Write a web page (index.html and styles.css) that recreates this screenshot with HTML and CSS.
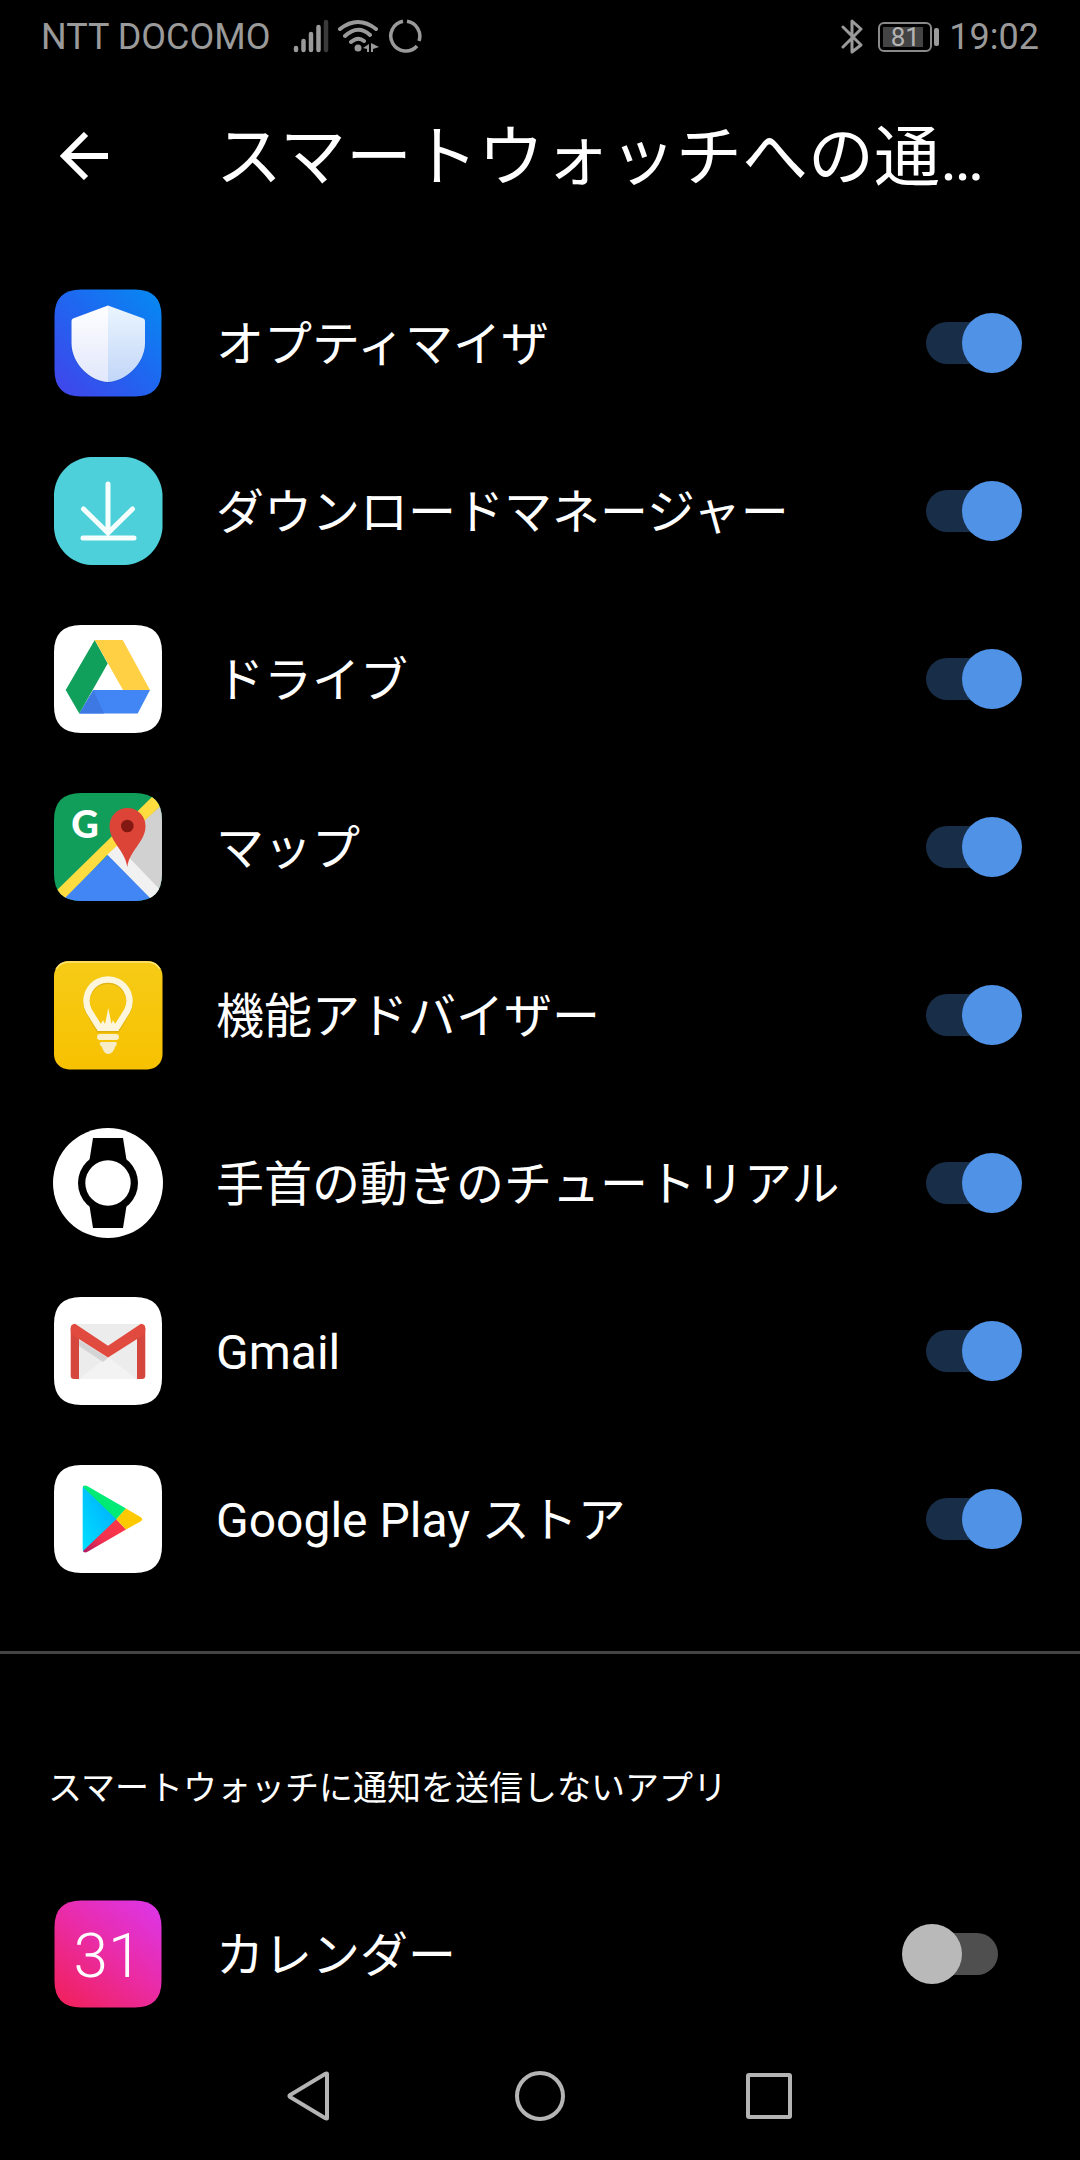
FILE: index.html
```html
<!DOCTYPE html>
<html lang="ja">
<head>
    <meta charset="utf-8">
    <meta name="viewport" content="width=device-width, initial-scale=1">
    <title>スマートウォッチへの通知</title>
    <link rel="stylesheet" href="styles.css">
</head>
<body>
    <div class="status-bar">
        <span class="carrier">NTT DOCOMO</span>
        <div class="status-icons">
            <!-- signal -->
            <svg width="36" height="36" viewBox="0 0 36 36" fill="none" stroke="#9a9a9a" stroke-width="4.500" stroke-linecap="round">
                <path d="M3 29v2M10.500 22v9M18 15v16M25.500 8v23"/>
                <path d="M33 3v28" stroke="#3a3a3a"/>
            </svg>
            <!-- wifi -->
            <svg width="42" height="36" viewBox="0 0 42 36" fill="none" stroke="#9a9a9a" stroke-width="4" stroke-linecap="round">
                <path d="M3 10Q21-4 39 10M8 17Q21 5 33 16M14 23Q21 17 27 22"/>
                <circle cx="21" cy="29" r="3.500" fill="#9a9a9a" stroke="none"/>
                <path d="M32 25v8h-2v-3l-4-1zM34 24v9h2v-3l6-2z" fill="#9a9a9a" stroke="none"/>
            </svg>
            <!-- data saver ring -->
            <svg width="36" height="36" viewBox="0 0 36 36" fill="none" stroke="#9a9a9a" stroke-width="3.500">
                <path d="M20 2.300A15 15 0 0 1 32 22M30 27A15 15 0 1 1 16 2.300"/>
            </svg>
        </div>
        <div class="status-right">
            <svg width="22" height="36" viewBox="0 0 22 36" fill="none" stroke="#9a9a9a" stroke-width="3" stroke-linejoin="round" stroke-linecap="round">
                <path d="M2 8L20 26L11 33V2L20 10L2 28"/>
            </svg>
            <div class="battery"><span class="battery-level">81</span></div>
            <span class="clock">19:02</span>
        </div>
    </div>

    <header class="header">
        <button class="back" type="button" aria-label="戻る">
            <svg width="48" height="48" viewBox="0 0 48 48" fill="none" stroke="#fff" stroke-width="6">
                <path d="M26 2L4 24L26 46M4 24H48"/>
            </svg>
        </button>
        <h1 class="title">スマートウォッチへの通…</h1>
    </header>

    <main>
        <div class="app-list">
            <label class="app">
                <svg class="icon" viewBox="0 0 110 110">
                    <defs>
                        <linearGradient id="optBg" x1="0" y1="1" x2="1" y2="0">
                            <stop offset="0" stop-color="#4343ea"/>
                            <stop offset="0.5" stop-color="#2065f0"/>
                            <stop offset="1" stop-color="#048bf2"/>
                        </linearGradient>
                        <linearGradient id="optL" x1="0" y1="0" x2="0" y2="1">
                            <stop offset="0" stop-color="#fff"/>
                            <stop offset="1" stop-color="#e1e7fb"/>
                        </linearGradient>
                        <linearGradient id="optR" x1="0" y1="0" x2="0" y2="1">
                            <stop offset="0" stop-color="#eaf5fe"/>
                            <stop offset="1" stop-color="#c2d6f8"/>
                        </linearGradient>
                    </defs>
                    <path d="M28 1.500H82Q108.500 1.500 108.500 28V82Q108.500 108.500 82 108.500H28Q1.500 108.500 1.500 82V28Q1.500 1.500 28 1.500Z" fill="url(#optBg)"/>
                    <path d="M55 18L92 31.500V56C92 76 74 93 55 95C36 93 18 76 18 56V31.500Z" fill="#1c49c4" opacity="0.4"/>
                    <path d="M55 17.500L20 30.500Q18.500 31 18.500 33V55C18.500 76 38 93.500 55 94Z" fill="url(#optL)"/>
                    <path d="M55 17.500L90.500 30.500Q92 31 92 33V55C92 76 72 93.500 55 94Z" fill="url(#optR)"/>
                </svg>
                <span class="name">オプティマイザ</span>
                <input class="switch" type="checkbox" role="switch" checked>
            </label>
            <label class="app">
                <svg class="icon" viewBox="0 0 110 110">
                    <path d="M38 1H72C92 2 108 18 109.500 38V72C108 92 92 108 72 109H38C18 108 2 92 1 72V38C2 18 18 2 38 1Z" fill="#4dd0d9"/>
                    <path d="M55 28V76M30.500 53L55 77L79.500 53M30 82H81" fill="none" stroke="#f6fffe" stroke-width="5" stroke-linecap="round"/>
                </svg>
                <span class="name">ダウンロードマネージャー</span>
                <input class="switch" type="checkbox" role="switch" checked>
            </label>
            <label class="app">
                <svg class="icon" viewBox="0 0 110 110">
                    <path d="M28 1H82Q109 1 109 28V82Q109 109 82 109H28Q1 109 1 82V28Q1 1 28 1Z" fill="#fff"/>
                    <path d="M40.300 66H97L84.700 89.500H26.300Z" fill="#4285f4"/>
                    <path d="M40.300 66L26.300 89.500H51Z" fill="#3d78e3"/>
                    <path d="M41.700 16L54.700 39.500L26.300 89.500L12.700 66Z" fill="#11a05c"/>
                    <path d="M41.700 16H69.700L97 66H70Z" fill="#ffcf44"/>
                </svg>
                <span class="name">ドライブ</span>
                <input class="switch" type="checkbox" role="switch" checked>
            </label>
            <label class="app">
                <svg class="icon" viewBox="0 0 110 110">
                    <defs>
                        <clipPath id="mapClip">
                            <path d="M28 1H82Q109 1 109 28V82Q109 109 82 109H28Q1 109 1 82V28Q1 1 28 1Z"/>
                        </clipPath>
                    </defs>
                    <g clip-path="url(#mapClip)">
                        <rect width="110" height="110" fill="#119e5a"/>
                        <path d="M112 10V110H100L55 60Z" fill="#d1d1d1"/>
                        <path d="M63 52L115 106L102 112L53 62Z" fill="#f1f1f1"/>
                        <path d="M100 4L112 10L55 62L10 110L-2 104Z" fill="#ffdc3f"/>
                        <path d="M54.700 63L101 110H8Z" fill="#4285f4"/>
                        <path d="M74.300 75C72 58 56.500 50 56.500 34A18 18 0 0 1 92.500 34C92.500 50 76.500 58 74.300 75Z" fill="#dc4437"/>
                        <circle cx="74.300" cy="34" r="6.300" fill="#821811"/>
                    </g>
                    <text class="map-g" x="32" y="46">G</text>
                </svg>
                <span class="name">マップ</span>
                <input class="switch" type="checkbox" role="switch" checked>
            </label>
            <label class="app">
                <svg class="icon" viewBox="0 0 110 110">
                    <defs>
                        <linearGradient id="tipBg" x1="0" y1="0" x2="0" y2="1">
                            <stop offset="0" stop-color="#f6cb17"/>
                            <stop offset="1" stop-color="#f7c100"/>
                        </linearGradient>
                    </defs>
                    <rect x="1" y="1" width="108.500" height="108.500" rx="15" fill="url(#tipBg)"/>
                    <path d="M3 9Q7 2 16 2H94Q103 2 107 9" fill="none" stroke="#ffe473" stroke-width="1.500"/>
                    <g fill="none" stroke="#c59a0c" stroke-width="6" opacity="0.5" transform="translate(0 1.500)">
                        <path d="M46 68L36 51A21.500 21.500 0 1 1 74 51L64 68Z"/>
                    </g>
                    <path d="M46 67L36 51A21.500 21.500 0 1 1 74 51L64 67" fill="none" stroke="#fdf6dc" stroke-width="6.500" stroke-linejoin="round" stroke-linecap="round"/>
                    <path d="M44 71L50 60L52 64L55.300 48L58.500 64L60 60L66 71Z" fill="#fdf6dc"/>
                    <rect x="44" y="74" width="22" height="6" rx="3" fill="#fbf0cb"/>
                    <path d="M48 82H63Q65 84 62 87Q60 94 55 94Q51 94 49 87Q45 84 48 82Z" fill="#f7ecc8"/>
                </svg>
                <span class="name">機能アドバイザー</span>
                <input class="switch" type="checkbox" role="switch" checked>
            </label>
            <label class="app">
                <svg class="icon" viewBox="0 0 110 110">
                    <circle cx="55" cy="55" r="55" fill="#fff"/>
                    <path d="M40 10H70L73.500 32V78L70 100H40L36.500 78V32Z"/>
                    <circle cx="55" cy="55" r="30"/>
                    <circle cx="55" cy="55" r="22.700" fill="#fff"/>
                </svg>
                <span class="name">手首の動きのチュートリアル</span>
                <input class="switch" type="checkbox" role="switch" checked>
            </label>
            <label class="app">
                <svg class="icon" viewBox="0 0 110 110">
                    <path d="M28 1H82Q109 1 109 28V82Q109 109 82 109H28Q1 109 1 82V28Q1 1 28 1Z" fill="#fff"/>
                    <rect x="20" y="28" width="70" height="55" fill="#ececec"/>
                    <path d="M26 83L50 64L55 61L84 83Z" fill="#f3f3f3"/>
                    <path d="M26 44L55 62L50 66L26 50Z" fill="#d4d4d4"/>
                    <path d="M26 40V83H21Q17.700 83 17.700 79.500V32H26ZM84 40V83H89Q92.300 83 92.300 79.500V32H84Z" fill="#d5473c"/>
                    <path d="M17.700 32Q17.700 28 22 27.700L55 49.700L88 27.700Q92.300 28 92.300 32L92 38L55 61.500L18 38Z" fill="#e04a3f"/>
                </svg>
                <span class="name">Gmail</span>
                <input class="switch" type="checkbox" role="switch" checked>
            </label>
            <label class="app">
                <svg class="icon" viewBox="0 0 110 110">
                    <defs>
                        <linearGradient id="playBlue" x1="1" y1="0" x2="0" y2="1">
                            <stop offset="0" stop-color="#00a7ff"/>
                            <stop offset="1" stop-color="#00e0ff"/>
                        </linearGradient>
                        <linearGradient id="playRed" x1="1" y1="0" x2="0" y2="1">
                            <stop offset="0" stop-color="#ff3a44"/>
                            <stop offset="0.600" stop-color="#f03050"/>
                            <stop offset="1" stop-color="#b01860"/>
                        </linearGradient>
                    </defs>
                    <path d="M28 1H82Q109 1 109 28V82Q109 109 82 109H28Q1 109 1 82V28Q1 1 28 1Z" fill="#fff"/>
                    <path d="M31 22L64 55.300L31 88Q29.700 87 29.700 85V24Q29.700 22 31 22Z" fill="url(#playBlue)"/>
                    <path d="M30 23Q31 20.500 35 22.500L73 44.500L63.300 55.300Z" fill="#00ea76"/>
                    <path d="M30 87Q31 89.500 35 87.500L73 65.500L63.300 55.300Z" fill="url(#playRed)"/>
                    <path d="M73 44.500L87.500 53Q91 55.300 87.500 57.500L73 65.500L63.300 55.300Z" fill="#ffc900"/>
                </svg>
                <span class="name">Google Play ストア</span>
                <input class="switch" type="checkbox" role="switch" checked>
            </label>
        </div>

        <h2 class="section-title">スマートウォッチに通知を送信しないアプリ</h2>
        <div class="app-list-off">
            <label class="app">
                <svg class="icon" viewBox="0 0 110 110">
                    <defs>
                        <linearGradient id="calBg" x1="0.100" y1="1" x2="0.900" y2="0">
                            <stop offset="0" stop-color="#f0215c"/>
                            <stop offset="0.500" stop-color="#ea2ba4"/>
                            <stop offset="1" stop-color="#dd35e6"/>
                        </linearGradient>
                    </defs>
                    <path d="M28 1.500H82Q108.500 1.500 108.500 28V82Q108.500 108.500 82 108.500H28Q1.500 108.500 1.500 82V28Q1.500 1.500 28 1.500Z" fill="url(#calBg)"/>
                    <text class="cal-day" x="55" y="78">31</text>
                </svg>
                <span class="name">カレンダー</span>
                <input class="switch" type="checkbox" role="switch">
            </label>
        </div>
    </main>

    <nav class="nav-bar">
        <button type="button" aria-label="戻る">
            <svg width="60" height="60" viewBox="0 0 60 60"><path d="M47 8V52Q47 53 45 52L10 31Q9 30 10 29L45 8Q47 7 47 8Z"/></svg>
        </button>
        <button type="button" aria-label="ホーム">
            <svg width="60" height="60" viewBox="0 0 60 60"><circle cx="30" cy="30" r="23"/></svg>
        </button>
        <button type="button" aria-label="履歴">
            <svg width="60" height="60" viewBox="0 0 60 60"><rect x="8" y="9" width="42" height="42" rx="1"/></svg>
        </button>
    </nav>
</body>
</html>
```
FILE: styles.css
```css
* {
    box-sizing: border-box;
}

body {
    margin: 0;
    min-height: 100vh;
    background-color: #000;
    color: #fff;
    font-family: Roboto, "Noto Sans CJK JP", sans-serif;
}

button {
    display: flex;
    padding: 0;
    border: none;
    background: none;
    cursor: pointer;
}

/* Status bar */
.status-bar {
    display: flex;
    align-items: center;
    height: 74px;
    padding: 0 41px;
    color: #9a9a9a;
    font-size: 36px;
}

.status-icons {
    display: flex;
    gap: 8px;
    margin-left: 23px;
}

.status-right {
    display: flex;
    align-items: center;
    gap: 15px;
    margin-left: auto;
}

.battery {
    position: relative;
    width: 54px;
    height: 30px;
    padding: 3px;
    border: 2px solid #8a8a8a;
    border-radius: 6px;
}

/* battery tip */
.battery::after {
    content: "";
    position: absolute;
    top: 4px;
    right: -9px;
    width: 5px;
    height: 18px;
    border-radius: 2px;
    background-color: #9a9a9a;
}

.battery-level {
    display: block;
    height: 20px;
    background: linear-gradient(to right, #444 90%, transparent 90%);
    color: #b4b4b4;
    font-size: 26px;
    line-height: 20px;
    text-align: center;
}

.clock {
    margin-left: 2px;
}

/* Header */
.header {
    display: flex;
    align-items: center;
    gap: 108px;
    height: 164px;
    padding: 0 60px;
}

.title {
    margin: 0;
    padding-top: 3px;
    font-size: 66px;
    font-weight: 400;
    line-height: 80px;
    white-space: nowrap;
}

/* App list */
.app-list {
    padding: 21px 0 48px;
    border-bottom: 3px solid #444;
}

.app {
    display: flex;
    align-items: center;
    gap: 53px;
    height: 168px;
    padding: 0 58px 0 53px;
    cursor: pointer;
}

.app-list-off .app {
    padding-right: 82px;
}

.icon {
    flex: none;
    width: 110px;
    height: 110px;
}

.name {
    flex: 1;
    padding-top: 4px;
    font-size: 48px;
    line-height: 72px;
}

.map-g {
    fill: #fff;
    font-family: Lato, sans-serif;
    font-size: 38px;
    font-weight: 900;
    text-anchor: middle;
}

.cal-day {
    fill: #fff;
    font-size: 62px;
    font-weight: 300;
    text-anchor: middle;
}

/* Switch */
.switch {
    appearance: none;
    display: grid;
    align-items: center;
    flex: none;
    width: 96px;
    height: 60px;
    margin: 0;
    cursor: pointer;
}

.switch::before,
.switch::after {
    content: "";
    grid-area: 1 / 1;
}

.switch::before {
    justify-self: end;
    width: 84px;
    height: 42px;
    border-radius: 21px;
    background-color: #4f4f4f;
}

.switch::after {
    width: 60px;
    height: 60px;
    border-radius: 50%;
    background-color: #b9b9b9;
}

.switch:checked::before {
    justify-self: start;
    background-color: #182d47;
}

.switch:checked::after {
    justify-self: end;
    background-color: #4f92e6;
}

.section-title {
    margin: 0;
    padding: 110px 48px 58px;
    font-size: 34px;
    font-weight: 400;
    line-height: 48px;
}

/* Navigation bar */
.nav-bar {
    display: flex;
    justify-content: center;
    align-items: center;
    gap: 170px;
    height: 116px;
}

.nav-bar svg {
    fill: none;
    stroke: #b4b4b4;
    stroke-width: 4;
}
```
